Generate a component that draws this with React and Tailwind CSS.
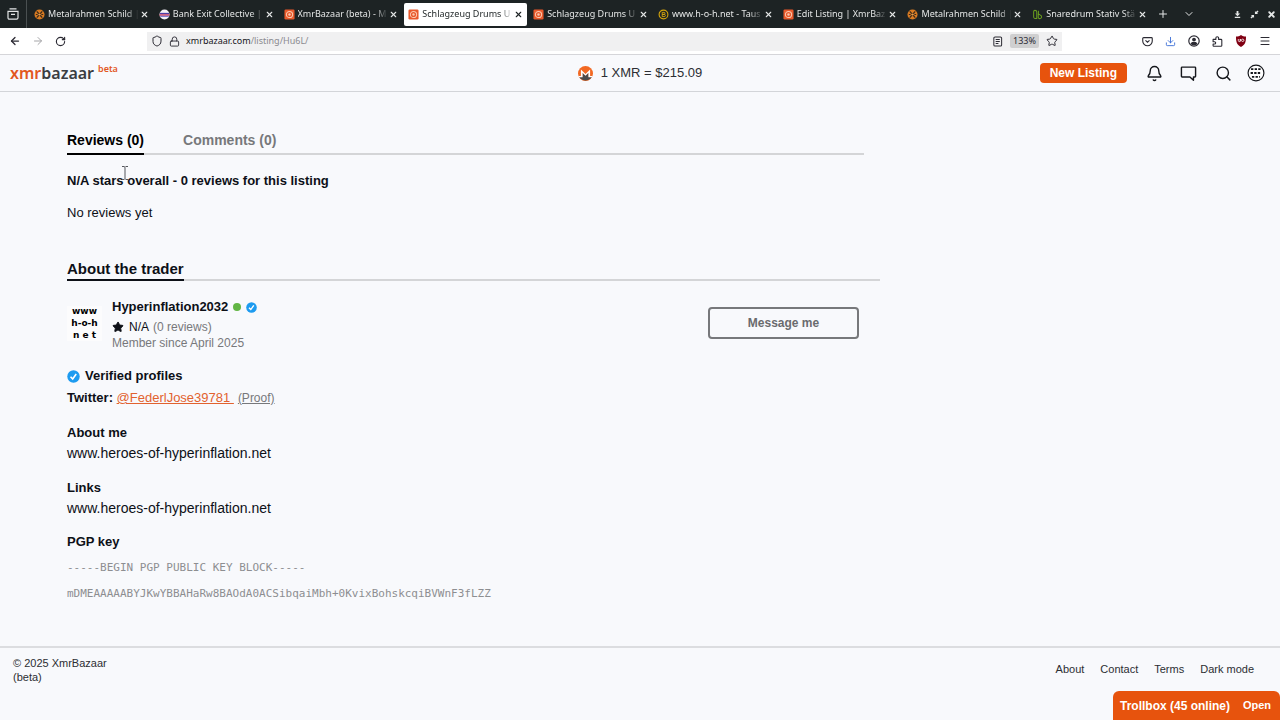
import { ArrowLeft, ArrowRight, RotateCw, Shield, Lock, Star, Plus, ChevronDown, Menu, X, Bell, Search, Download } from 'lucide-react';
import { clsx } from 'clsx';

const tabs = [
    { title: 'Metalrahmen Schild |', icon: 'coin' },
    { title: 'Bank Exit Collective |', icon: 'globe' },
    { title: 'XmrBazaar (beta) - M', icon: 'bazaar' },
    { title: 'Schlagzeug Drums U', icon: 'bazaar', active: true },
    { title: 'Schlagzeug Drums U', icon: 'bazaar' },
    { title: 'www.h-o-h.net - Taus', icon: 'ring' },
    { title: 'Edit Listing | XmrBaz', icon: 'bazaar' },
    { title: 'Metalrahmen Schild |', icon: 'coin' },
    { title: 'Snaredrum Stativ Stä', icon: 'leaf' },
];

const footerLinks = ['About', 'Contact', 'Terms', 'Dark mode'];

function Favicon({ icon }) {
    if (icon === 'coin') {
        return (
            <svg viewBox="0 0 12 12" className="size-[11px] shrink-0">
                <circle cx="6" cy="6" r="5.5" fill="#d97b22" />
                <path d="M3 2.5 6 6M9 2.5 6 6M3 9.5 6 6M9 9.5 6 6M2 6h2M8 6h2" stroke="#3a2a1a" strokeWidth="1.3" />
                <circle cx="6" cy="6" r="1.2" fill="#e8a050" />
            </svg>
        );
    }
    if (icon === 'globe') {
        return (
            <svg viewBox="0 0 12 12" className="size-[11px] shrink-0">
                <circle cx="6" cy="6" r="5.5" fill="#f4f1f8" />
                <path d="M1 4.2h10v1.6H1z" fill="#4e3ca8" />
                <path d="M.6 5.8h10.8v1.5H.6z" fill="#d33a55" />
                <path d="M1 7.3h10l-.6 1.2H1.6z" fill="#5b59c4" />
            </svg>
        );
    }
    if (icon === 'ring') {
        return (
            <svg viewBox="0 0 12 12" className="size-[11px] shrink-0" fill="none">
                <circle cx="6" cy="6" r="4.8" stroke="#d5a50c" strokeWidth="1.2" />
                <path d="M4.6 3.7h1.9a1.1 1.1 0 0 1 0 2.2H4.6zm0 2.2h2.2a1.2 1.2 0 0 1 0 2.4H4.6z" stroke="#d5a50c" />
            </svg>
        );
    }
    if (icon === 'leaf') {
        return (
            <svg viewBox="0 0 12 12" className="size-[11px] shrink-0" fill="none" stroke="#6a9c1f" strokeWidth="1.1">
                <path d="M3.200 1.500c1.200 0 2 .8 2 1.800v7H3.400c-1 0-1.600-.8-1.600-1.800V3c0-.9.500-1.500 1.400-1.500z" />
                <path d="M7 1.800v3.500l3.200 2.200c.8 1.600-.2 3-1.800 3-1 0-1.600-.6-1.600-1.600V5" />
            </svg>
        );
    }
    return (
        <svg viewBox="0 0 12 12" className="size-[11px] shrink-0">
            <rect x=".5" y=".5" width="11" height="11" rx="1.5" fill="#e9592b" />
            <circle cx="6" cy="6" r="3.4" fill="none" stroke="#fbc9b0" strokeWidth="1.1" />
            <circle cx="6" cy="6" r="1.3" fill="#fbc9b0" />
        </svg>
    );
}

function TabStrip() {
    return (
        <div className="flex h-7 items-center bg-[#1d2324] text-[#e4e6e6]">
            <button aria-label="Recent browsing" className="flex h-7 w-[27px] items-center justify-center border-r border-[#4a5051]">
                <svg viewBox="0 0 12 12" className="size-3" fill="none" stroke="currentColor" strokeWidth="1.2">
                    <path d="M2.500.8h7M1 3.300h10v6.500c0 .8-.6 1.400-1.400 1.400H2.400C1.600 11.200 1 10.600 1 9.800zM4 6.300h4" />
                </svg>
            </button>
            <div className="flex min-w-0 flex-1 pl-[2px]">
                {tabs.map((tab, i) => (
                    <div key={i} className="min-w-0 flex-1 px-px">
                        <div className={clsx('flex h-[23px] items-center rounded-xs px-1', tab.active && 'bg-white text-[#1d2324]')}>
                            <Favicon icon={tab.icon} />
                            <span className="ml-[3px] min-w-0 flex-1 overflow-hidden mask-r-from-85% font-['Noto_Sans',sans-serif] text-[9px] leading-4 whitespace-nowrap">
                                {tab.title}
                            </span>
                            <button aria-label="Close tab" className="ml-px shrink-0">
                                <X size={9} strokeWidth={3} />
                            </button>
                        </div>
                    </div>
                ))}
            </div>
            <div className="flex w-[128px] items-center pl-[5px]">
                <button aria-label="New tab"><Plus size={12} /></button>
                <button aria-label="List all tabs" className="ml-[14px]"><ChevronDown size={12} /></button>
                <div className="ml-auto flex gap-2 pr-1">
                    <button aria-label="Minimize">
                        <svg viewBox="0 0 10 10" className="size-[9px]" fill="currentColor"><path d="M4 1h2v3h2L5 7 2 4h2zM2 7.600h6V9H2z" /></svg>
                    </button>
                    <button aria-label="Restore">
                        <svg viewBox="0 0 10 10" className="size-[9px]" fill="currentColor"><path d="M5.500 1v3.500H9L7.800 3.400 9.500 1.700 8.300.5 6.600 2.200zM4.500 9V5.500H1l1.200 1.100L.5 8.300l1.200 1.200 1.700-1.700z" /></svg>
                    </button>
                    <button aria-label="Close window"><X size={9} strokeWidth={5} /></button>
                </div>
            </div>
        </div>
    );
}

function AddressBar() {
    return (
        <div className="flex h-[27px] items-center border-b border-[#d5d5d9] bg-white text-[#2b2a33]">
            <div className="flex w-[147px] gap-[11px] pl-[9px]">
                <button aria-label="Back"><ArrowLeft size={12} strokeWidth={2.5} /></button>
                <button aria-label="Forward" className="text-[#a5a5a8]"><ArrowRight size={12} /></button>
                <button aria-label="Reload"><RotateCw size={11} strokeWidth={2.5} /></button>
            </div>
            <div className="flex h-[19px] flex-1 items-center bg-[#f0f0f1] pr-1 pl-1 font-['Noto_Sans',sans-serif] text-[9px]">
                <Shield size={12} />
                <Lock size={11} className="ml-[6px]" />
                <span className="ml-[6px] flex-1 text-[#8a8a8f]">
                    <span className="text-[#15141a]">xmrbazaar.com</span>/listing/Hu6L/
                </span>
                <svg viewBox="0 0 12 12" className="size-[11px]" fill="none" stroke="currentColor" strokeWidth="1.1">
                    <rect x="2" y="1" width="8.5" height="10" rx="1.3" />
                    <path d="M4 3.800h4.500M4 6h4.500M4 8.200h3" />
                </svg>
                <button className="ml-[7px] rounded-xs bg-[#cfcfd0] px-[3px] leading-[14px]">133%</button>
                <button aria-label="Bookmark" className="ml-[7px]"><Star size={12} /></button>
            </div>
            <div className="flex w-[218px] items-center justify-end gap-3 pr-[9px]">
                <svg viewBox="0 0 12 12" className="size-[11px]" fill="none" stroke="currentColor" strokeWidth="1.2">
                    <path d="M1.800 1.800h8.400c.6 0 1 .4 1 1V5.500a5.200 5.200 0 0 1-10.400 0V2.800c0-.6.4-1 1-1z" />
                    <path d="m3.800 4.800 2.200 2 2.200-2" />
                </svg>
                <Download size={11} className="text-[#3b6fd6]" />
                <svg viewBox="0 0 12 12" className="size-3">
                    <circle cx="6" cy="6" r="5.2" fill="none" stroke="currentColor" strokeWidth="1.2" />
                    <circle cx="6" cy="4.6" r="1.9" fill="currentColor" />
                    <path d="M2.600 9c.4-1.400 1.300-2 2.400-2h2c1.100 0 2 .6 2.400 2-1.600 1.700-5.200 1.700-6.800 0z" fill="currentColor" />
                </svg>
                <svg viewBox="0 0 12 12" className="size-[11px]" fill="none" stroke="currentColor" strokeWidth="1.2" strokeLinejoin="round">
                    <path d="M1.200 3.700h3V2.300a1.500 1.500 0 0 1 3 0v1.400h2.600c.5 0 .9.400.9.900v5.700c0 .5-.4.900-.9.900H2.100c-.5 0-.9-.4-.9-.9V8.800h1.500a1.300 1.300 0 0 0 0-2.600H1.200z" />
                </svg>
                <svg viewBox="0 0 12 12" className="size-3">
                    <path d="M6 0c1.500 1 3 1.500 5 1.500 0 5-.5 8-5 10.500C1.500 9.500 1 6.500 1 1.500 3 1.500 4.500 1 6 0z" fill="#800013" />
                    <path d="M3.300 4v1.500c0 1.500 2 1.500 2 0V4M5.300 4v2.500" stroke="#fff" strokeWidth=".8" fill="none" />
                    <circle cx="7.7" cy="5.3" r="1.2" stroke="#fff" strokeWidth=".8" fill="none" />
                </svg>
                <Menu size={12} />
            </div>
        </div>
    );
}

function MoneroIcon() {
    return (
        <svg viewBox="0 0 32 32" className="size-[15px]">
            <circle cx="16" cy="16" r="16" fill="#f26822" />
            <path d="M2.600 23.500h7V13.600l6.400 6.400 6.400-6.400v9.900h7A16 16 0 0 1 2.600 23.500z" fill="#4c4c4c" />
            <path d="M.9 21.300h5.300V7.500L16 17.300l9.800-9.800v13.800h5.300l-1.400 2.900h-7.400v-9.800L16 20.700l-6.300-6.300v9.800H2.300z" fill="#fff" />
        </svg>
    );
}

function AvatarIcon() {
    return (
        <svg viewBox="0 0 20 20" className="size-[18px]" fill="none" stroke="#15171c">
            <circle cx="10" cy="10" r="8.8" fill="#fff" strokeWidth="1.3" />
            <path d="M4.500 5.800h11M4 10h12M5.500 14.200h9" strokeWidth="2" strokeDasharray="2.600 1.400" />
        </svg>
    );
}

function VerifiedIcon({ className }) {
    return (
        <svg viewBox="0 0 24 24" className={className}>
            <circle cx="12" cy="12" r="11.5" fill="#1d9bf0" />
            <path d="m6.500 12.500 4 4L17 7.500" fill="none" stroke="#fff" strokeWidth="3" />
        </svg>
    );
}

function SiteHeader() {
    return (
        <header className="grid h-[37px] grid-cols-3 items-center border-b border-[#d3d5d9] px-[10px]">
            <a href="#home" className="flex items-center font-['Noto_Sans',sans-serif] font-semibold text-[#3b3d42]">
                <span className="text-base leading-5"><span className="text-[#e2571e]">xmr</span>bazaar</span>
                <sup className="ml-1 text-[9px] leading-3 text-[#e2571e]">beta</sup>
            </a>
            <div className="flex items-center justify-center gap-2 text-[13px] text-[#2c2e33]">
                <MoneroIcon />
                1 XMR = $215.09
            </div>
            <div className="flex items-center justify-end pr-[5px] text-[#15171c]">
                <button className="h-5 rounded-sm bg-[#e7530d] px-[10px] text-[12px] leading-5 font-bold text-white">New Listing</button>
                <button aria-label="Notifications" className="ml-[19px]"><Bell size={17} /></button>
                <button aria-label="Messages" className="ml-[17px]">
                    <svg viewBox="0 0 24 24" className="size-[17px]" fill="none" stroke="currentColor" strokeWidth="2" strokeLinejoin="round">
                        <path d="M3 3h18a1 1 0 0 1 1 1v12a1 1 0 0 1-1 1h-2v4.500L14 17H3a1 1 0 0 1-1-1V4a1 1 0 0 1 1-1z" />
                    </svg>
                </button>
                <button aria-label="Search" className="ml-[18px]"><Search size={17} /></button>
                <button aria-label="Account" className="ml-[15px]"><AvatarIcon /></button>
            </div>
        </header>
    );
}

function Reviews() {
    return (
        <section className="max-w-[797px]">
            <div className="flex gap-[39px] border-b-2 border-[#d4d5d7] text-[14px] leading-5 font-bold">
                <button className="-mb-[2px] border-b-2 border-black pb-[3px] text-black">Reviews (0)</button>
                <button className="pb-[3px] text-[#77787b]">Comments (0)</button>
            </div>
            <p className="mt-4 text-[13px] leading-5 font-bold">N/A stars overall - 0 reviews for this listing</p>
            <p className="mt-3 text-[13px] leading-5">No reviews yet</p>
        </section>
    );
}

function Trader() {
    return (
        <section className="mt-9 max-w-[813px]">
            <div className="flex border-b-2 border-[#d4d5d7]">
                <h2 className="-mb-[2px] border-b-2 border-[#0d1017] text-[15px] leading-5 font-bold">About the trader</h2>
            </div>
            <div className="mt-4 flex items-center justify-between pr-[21px]">
                <div className="flex items-center gap-[10px]">
                    <div className="flex size-[35px] flex-col items-center justify-center bg-[#fcfcfd] font-['DejaVu_Sans',sans-serif] text-[9px] leading-3 font-bold text-black">
                        <span>www</span>
                        <span>h-o-h</span>
                        <span>n e t</span>
                    </div>
                    <div>
                        <div className="flex items-center gap-[5px] leading-5">
                            <a href="#trader" className="text-[13px] font-bold">Hyperinflation2032</a>
                            <span className="size-2 rounded-full bg-[#62b544]" />
                            <VerifiedIcon className="size-[11px]" />
                        </div>
                        <div className="flex items-center text-[12px] leading-5">
                            <Star size={12} fill="currentColor" className="mr-[5px]" />
                            N/A
                            <span className="ml-1 text-[#77787b]">(0 reviews)</span>
                        </div>
                        <div className="text-[12px] leading-3 text-[#77787b]">Member since April 2025</div>
                    </div>
                </div>
                <button className="h-8 w-[151px] rounded-sm border-2 border-[#77787b] text-[12px] font-bold text-[#6a6b6e]">Message me</button>
            </div>

            <h3 className="mt-[17px] flex items-center gap-[5px] text-[13px] leading-5 font-bold">
                <VerifiedIcon className="size-[13px]" />
                Verified profiles
            </h3>
            <p className="mt-[2px] text-[13px] leading-5">
                <span className="font-bold">Twitter: </span>
                <a href="#twitter" className="whitespace-pre text-[#e2622f] underline">@FederlJose39781 </a>
                <a href="#proof" className="ml-1 text-[12px] text-[#77787b] underline">(Proof)</a>
            </p>

            <h3 className="mt-[15px] text-[13px] leading-5 font-bold">About me</h3>
            <p className="text-[14px] leading-5">www.heroes-of-hyperinflation.net</p>
            <h3 className="mt-[15px] text-[13px] leading-5 font-bold">Links</h3>
            <p className="text-[14px] leading-5">www.heroes-of-hyperinflation.net</p>
            <h3 className="mt-[14px] text-[13px] leading-5 font-bold">PGP key</h3>
            <pre className="mt-[9px] h-[40px] overflow-hidden font-['DejaVu_Sans_Mono',monospace] text-[11px] leading-[13px] text-[#8d8e91]">
                {'-----BEGIN PGP PUBLIC KEY BLOCK-----\n\nmDMEAAAAABYJKwYBBAHaRw8BAOdA0ACSibqaiMbh+0KvixBohskcqiBVWnF3fLZZ'}
            </pre>
        </section>
    );
}

export default function App() {
    return (
        <div className="flex min-h-screen flex-col bg-[#f8f9fc] font-['Liberation_Sans',sans-serif] text-[#0d1017]">
            <TabStrip />
            <AddressBar />
            <SiteHeader />
            <main className="flex-1 pt-[38px] pl-[67px]">
                <Reviews />
                <Trader />
            </main>
            <footer className="flex h-[74px] items-start justify-between border-t-2 border-[#dcdde0] pr-[26px] pl-[13px] text-[11px] text-[#2c2e33]">
                <p className="mt-2 w-[110px] leading-[14px]">© 2025 XmrBazaar (beta)</p>
                <nav className="mt-[13px] flex gap-4 leading-4">
                    {footerLinks.map((link) => (
                        <a key={link} href="#footer">{link}</a>
                    ))}
                </nav>
            </footer>

            {/* Chat drawer pinned to the corner */}
            <button className="fixed right-0 bottom-0 flex h-[29px] w-[167px] items-center justify-between rounded-t-md bg-[#e7530d] pr-[9px] pl-[7px] text-white">
                <span className="text-[12px] font-bold">Trollbox (45 online)</span>
                <span className="text-[11px] font-bold">Open</span>
            </button>

            {/* Text cursor */}
            <svg viewBox="0 0 8 14" className="pointer-events-none absolute top-[166px] left-[121px] h-[14px] w-2" fill="none" stroke="#55575c">
                <path d="M1 .5h2.200L4 1.300 4.800.5H7M4 1.300v11.400M1 13.500h2.200l.8-.8.8.8H7" />
            </svg>
        </div>
    );
}
